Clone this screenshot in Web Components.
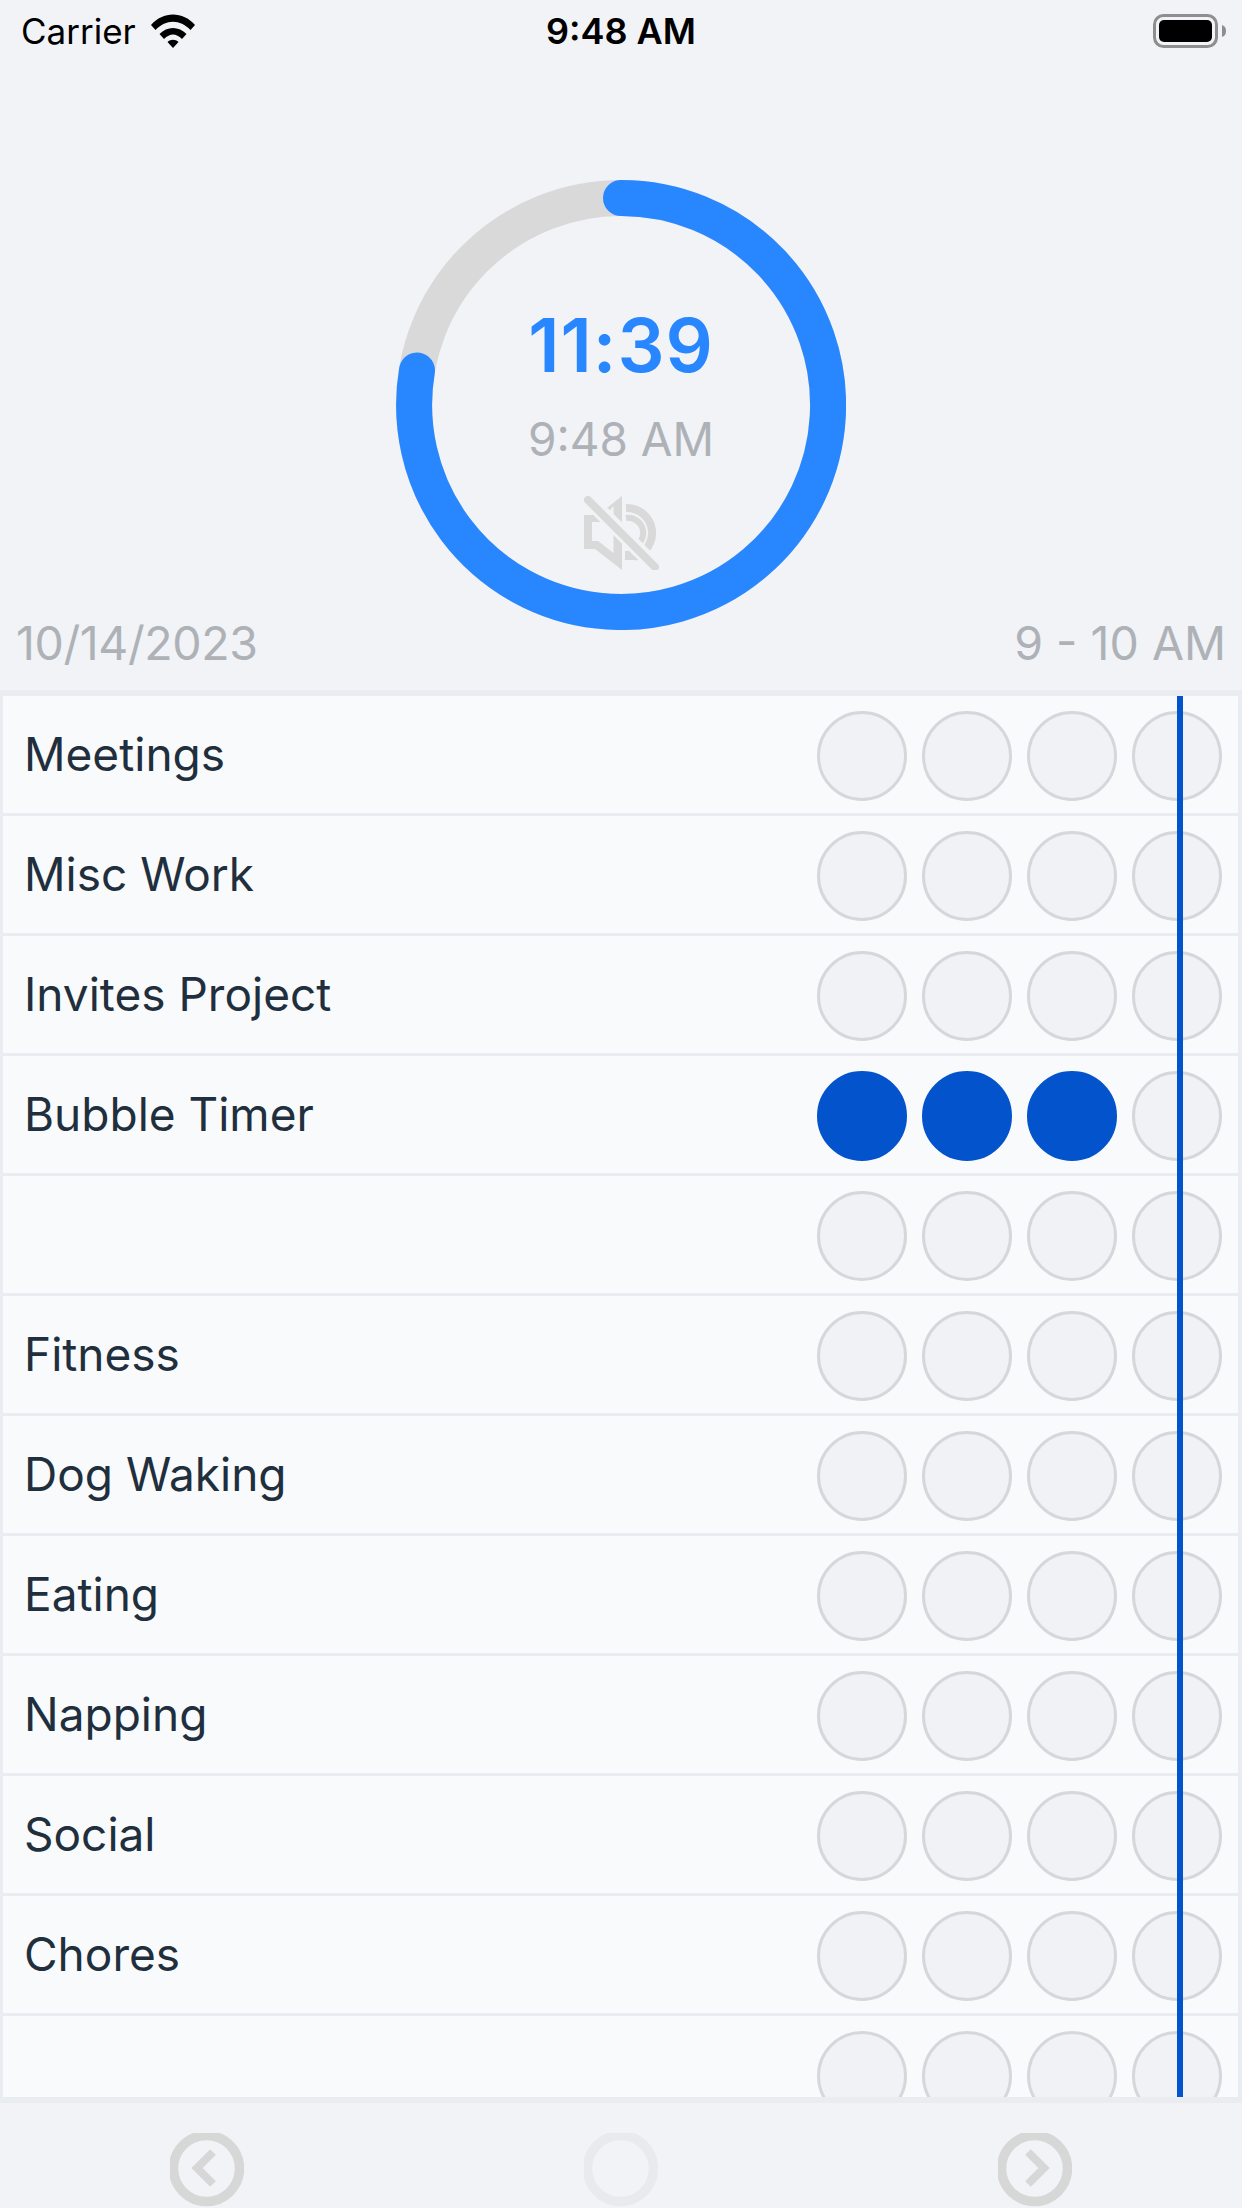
<!DOCTYPE html>
<html lang="en">
<head>
<meta charset="utf-8">
<title>Bubble Timer</title>
<style>
  html, body { margin: 0; padding: 0; background: #f1f3f7; }
  body { font-family: Inter, "Noto Sans", sans-serif; width: 1242px; height: 2208px; overflow: hidden; }
</style>
</head>
<body>
<timer-app></timer-app>

<script>
class StatusBar extends HTMLElement {
  constructor() {
    super();
    this.attachShadow({ mode: 'open' });
    this.shadowRoot.innerHTML = `
      <style>
        :host { display: grid; grid-template-columns: 1fr auto 1fr; align-items: center; box-sizing: border-box; height: 60px; padding: 2px 21px 0 21px; color: #000; }
        .left { display: flex; align-items: center; gap: 15px; font-size: 35px; }
        .time { font-size: 36px; font-weight: 600; }
        .right { display: flex; justify-content: flex-end; align-items: center; margin-right: -5px; }
        svg { display: block; }
      </style>
      <div class="left">
        <span>Carrier</span>
        <svg width="44" height="34" viewBox="0 0 44 34">
          <path d="M0 11 C12 -3 32 -3 44 11 L39.500 16 C29 5 15 5 4.500 16 Z" fill="#000"/>
          <path d="M8.500 20 C16 12 28 12 35.500 20 L31 25 C25 19 19 19 13 25 Z" fill="#000"/>
          <path d="M16.500 28 C19.500 25 24.500 25 27.500 28 L22 34 Z" fill="#000"/>
        </svg>
      </div>
      <span class="time">9:48 AM</span>
      <div class="right">
        <svg width="73" height="34" viewBox="0 0 73 34">
          <rect x="1.500" y="1.500" width="62" height="31" rx="9" fill="none" stroke="#8e8e8e" stroke-width="3"/>
          <rect x="6" y="6" width="53" height="22" rx="5" fill="#000"/>
          <path d="M69 11 C72 12 73 14 73 17 C73 20 72 22 69 23 Z" fill="#8e8e8e"/>
        </svg>
      </div>
    `;
  }
}

class TimerRing extends HTMLElement {
  constructor() {
    super();
    this.attachShadow({ mode: 'open' });
    this.shadowRoot.innerHTML = `
      <style>
        :host { display: grid; width: 450px; height: 450px; margin: 120px auto 0; }
        svg.ring, .inner { grid-area: 1 / 1; }
        svg { display: block; }
        .inner { display: flex; flex-direction: column; align-items: center; padding-top: 121px; box-sizing: border-box; }
        .left { font-size: 74px; line-height: 88px; font-weight: 600; color: #2887ff; letter-spacing: 1px; }
        .now { font-size: 46px; line-height: 58px; color: #aeb2b7; margin-top: 21px; }
        .mute { margin: 28px 0 0 2px; }
      </style>
      <svg class="ring" width="450" height="450" viewBox="0 0 450 450">
        <circle cx="225" cy="225" r="207" fill="none" stroke="#d9d9d9" stroke-width="36"/>
        <path d="M225 18 A207 207 0 1 1 21 190.500" fill="none" stroke="#2887ff" stroke-width="36" stroke-linecap="round"/>
      </svg>
      <div class="inner">
        <div class="left"><slot name="left"></slot></div>
        <div class="now"><slot name="now"></slot></div>
        <svg class="mute" width="76" height="74" viewBox="0 0 76 74">
          <path fill="#d9d9d9" fill-rule="evenodd" d="M38 0 L14 19 H0 V53 H11 L38 74 Z M29.500 10 L16 26 H8 V45 H14 L29.500 57 Z"/>
          <path fill="#d9d9d9" d="M41 55 H46 L53 64 H41 Z"/>
          <g fill="none" stroke="#d9d9d9">
            <path d="M42 12 A25 25 0 0 1 50 61" stroke-width="8"/>
            <path d="M42 22 A15 15 0 0 1 53 49" stroke-width="6"/>
            <path d="M2 1 L74 73" stroke="#f1f3f7" stroke-width="15"/>
            <path d="M4 4 L71 71" stroke-width="8" stroke-linecap="round"/>
          </g>
        </svg>
      </div>
    `;
  }
}

class DateRow extends HTMLElement {
  constructor() {
    super();
    this.attachShadow({ mode: 'open' });
    this.shadowRoot.innerHTML = `
      <style>
        :host { display: flex; justify-content: space-between; box-sizing: border-box; height: 75px; margin-top: -15px; padding: 0 16px; font-size: 46.500px; line-height: 57px; color: #aeb2b7; }
        ::slotted([slot="start"]) { letter-spacing: -0.400px; }
      </style>
      <slot name="start"></slot>
      <slot name="end"></slot>
    `;
  }
}

class BubbleDot extends HTMLElement {
  constructor() {
    super();
    this.attachShadow({ mode: 'open' });
    this.shadowRoot.innerHTML = `
      <style>
        :host { display: block; box-sizing: border-box; width: 90px; height: 90px; border-radius: 50%; background: #f1f2f6; border: 3px solid #d5d7da; }
        :host([filled]) { background: #0353cc; border-color: #0353cc; }
      </style>
    `;
  }
}

class ActivityRow extends HTMLElement {
  constructor() {
    super();
    this.attachShadow({ mode: 'open' });
    const filled = Number(this.getAttribute('filled') || 0);
    let dots = '';
    for (let i = 0; i < 4; i++) {
      dots += i < filled ? '<bubble-dot filled></bubble-dot>' : '<bubble-dot></bubble-dot>';
    }
    this.shadowRoot.innerHTML = `
      <style>
        :host { display: flex; justify-content: space-between; align-items: flex-start; flex: none; box-sizing: border-box; height: 117px; padding: 15px 16px 0 21px; background: #f9fafb; color: #1f2f3d; font-size: 46px; }
        .name { line-height: 87px; }
        .dots { display: flex; gap: 15px; }
      </style>
      <div class="name"><slot></slot></div>
      <div class="dots">${dots}</div>
    `;
  }
}

class ActivityList extends HTMLElement {
  constructor() {
    super();
    this.attachShadow({ mode: 'open' });
    this.shadowRoot.innerHTML = `
      <style>
        :host { display: block; box-sizing: border-box; height: 1413px; border: solid #e9ecf0; border-width: 6px 4px 6px 3px; background: #e9ecf0; }
        .scroll { position: relative; display: flex; flex-direction: column; gap: 3px; height: 1401px; overflow: hidden; }
        .now { position: absolute; top: 0; bottom: 0; left: 1174px; width: 6px; background: #0353cc; }
      </style>
      <div class="scroll">
        <slot></slot>
        <div class="now"></div>
      </div>
    `;
  }
}

class NavBar extends HTMLElement {
  constructor() {
    super();
    this.attachShadow({ mode: 'open' });
    const circle = (color) => `<circle cx="36.500" cy="35.500" r="33" fill="none" stroke="${color}" stroke-width="9.500"/>`;
    const chevron = (d) => `<path d="${d}" fill="none" stroke="#d7d7d7" stroke-width="8"/>`;
    this.shadowRoot.innerHTML = `
      <style>
        :host { display: grid; grid-template-columns: repeat(3, 1fr); justify-items: center; box-sizing: border-box; height: 105px; padding-top: 30px; overflow: hidden; }
        svg { display: block; }
      </style>
      <svg width="74" height="74" viewBox="0 0 74 74">${circle('#d7d7d7')}${chevron('M43 19 L27 35 L43 51')}</svg>
      <svg width="74" height="74" viewBox="0 0 74 74">${circle('#e9eaee')}</svg>
      <svg width="74" height="74" viewBox="0 0 74 74">${circle('#d7d7d7')}${chevron('M30 19 L46 35 L30 51')}</svg>
    `;
  }
}

class TimerApp extends HTMLElement {
  constructor() {
    super();
    this.attachShadow({ mode: 'open' });
    const activities = ['Meetings', 'Misc Work', 'Invites Project', 'Bubble Timer', '', 'Fitness', 'Dog Waking', 'Eating', 'Napping', 'Social', 'Chores', ''];
    const rows = activities.map((name) => {
      const filled = name === 'Bubble Timer' ? 3 : 0;
      return `<activity-row filled="${filled}">${name}</activity-row>`;
    }).join('');
    this.shadowRoot.innerHTML = `
      <style>
        :host { display: block; width: 1242px; height: 2208px; background: #f1f3f7; overflow: hidden; }
      </style>
      <status-bar></status-bar>
      <timer-ring>
        <span slot="left">11:39</span>
        <span slot="now">9:48 AM</span>
      </timer-ring>
      <date-row>
        <span slot="start">10/14/2023</span>
        <span slot="end">9 - 10 AM</span>
      </date-row>
      <activity-list>${rows}</activity-list>
      <nav-bar></nav-bar>
    `;
  }
}

customElements.define('status-bar', StatusBar);
customElements.define('timer-ring', TimerRing);
customElements.define('date-row', DateRow);
customElements.define('bubble-dot', BubbleDot);
customElements.define('activity-row', ActivityRow);
customElements.define('activity-list', ActivityList);
customElements.define('nav-bar', NavBar);
customElements.define('timer-app', TimerApp);
</script>
</body>
</html>
